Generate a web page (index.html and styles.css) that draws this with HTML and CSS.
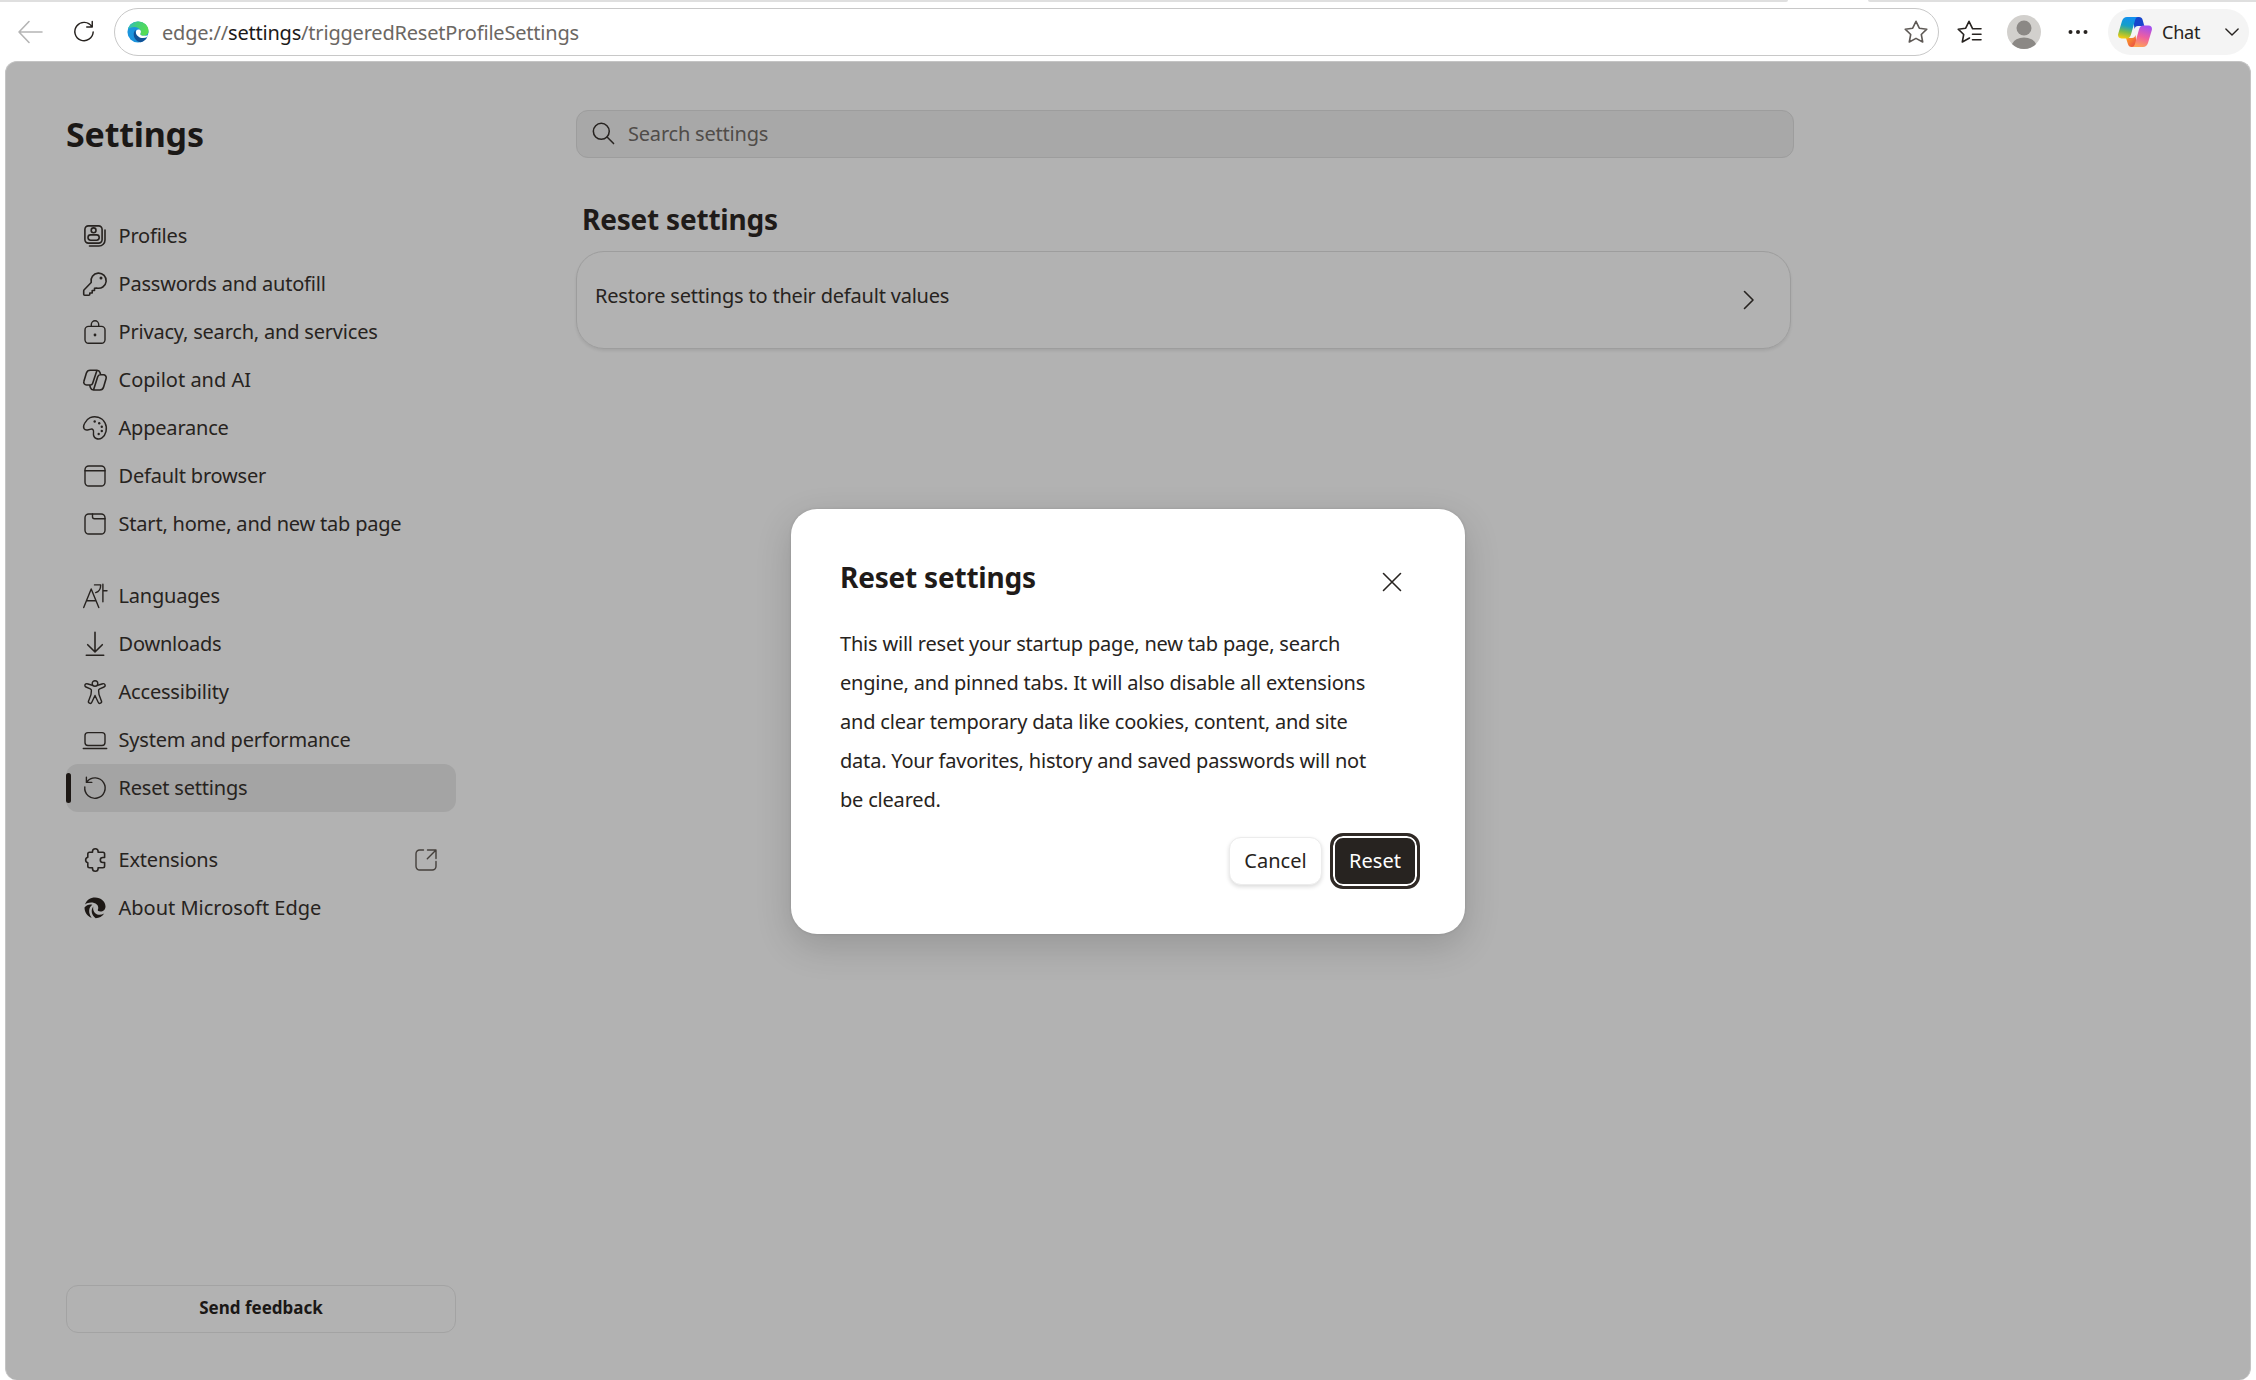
FILE: index.html
```html
<!DOCTYPE html>
<html lang="en">
<head>
    <meta charset="UTF-8">
    <meta name="viewport" content="width=device-width, initial-scale=1.0">
    <title>Settings</title>
    <link rel="stylesheet" href="styles.css">
</head>
<body>
    <div class="tabstrip"><i></i><i></i></div>
    <header class="toolbar">
        <svg class="icon back" viewBox="0 0 24 24"><path d="M24 12H1M11 1.500 1 12l10 10.500"/></svg>
        <svg class="icon reload" viewBox="0 0 24 24"><path d="M20.500 6.200A10 10 0 1 0 22 12M21 .500v6h-6"/></svg>
        <div class="address">
            <svg class="edge-logo" viewBox="0 0 24 24">
                <defs>
                    <linearGradient id="edge-green" x1="0" y1="0" x2="1" y2=".4">
                        <stop offset="0" stop-color="#2fb7d8"/>
                        <stop offset=".45" stop-color="#42cf7c"/>
                        <stop offset="1" stop-color="#55dc55"/>
                    </linearGradient>
                </defs>
                <circle cx="12" cy="12" r="11.500" fill="#1b94dd"/>
                <path d="M1 9C2.500 3.500 7 .500 12 .500c7 0 11.500 5 11.500 10 0 3.500-2.500 5.500-5.500 5.500-2.500 0-4-1-3.500-2.200.500-1 1-1.800.500-3.300C14 8 11 6.500 8 6.500 5 6.500 2.500 7.500 1 9z" fill="url(#edge-green)"/>
                <path d="M9.500 9.500C7 11.500 6.500 16 9 19.500c2 2.700 4.500 3.800 7 3.500 2.500-1 5-3 6-5.500-3 1.500-7 1.800-9.500-.500-2.500-2.300-3.500-5-3-7.500z" fill="#115297"/>
                <path d="M14.500 13.800c.500-1 1-1.800.500-3.300-.800-1.500-3.500-2-4.800-.200-1.200 2-.200 5 2.300 6.700 2.500 2.300 6.500 2 9.500.500l1-2c-5 1.500-9 .500-8.500-1.700z" fill="#fff"/>
            </svg>
            <div class="url">edge://<b>settings</b>/triggeredResetProfileSettings</div>
            <svg class="icon star" viewBox="0 0 24 24"><path d="M12 1.300l3.300 6.900 7.500 1-5.500 5.300 1.400 7.500L12 18.400 5.300 22l1.400-7.500L1.200 9.200l7.500-1z"/></svg>
        </div>
        <svg class="icon favorites" viewBox="0 0 24 24"><path d="M12.500 18 5.300 22l1.400-7.500L1.200 9.200l7.500-1L12 1.300l3.300 6.900M15.500 8.800H24M15.500 14.300H24M15.500 19.800H24"/></svg>
        <svg class="avatar" viewBox="0 0 34 34">
            <circle cx="17" cy="17" r="17" fill="#d2d0cd"/>
            <circle cx="17" cy="13" r="7.500" fill="#8b8885"/>
            <path d="M5 29a12.500 9 0 0 1 24 0 17 17 0 0 1-24 0z" fill="#8b8885"/>
        </svg>
        <svg class="dots" viewBox="0 0 20 6"><circle cx="2.500" cy="3" r="2"/><circle cx="10" cy="3" r="2"/><circle cx="17.500" cy="3" r="2"/></svg>
        <div class="chat">
            <svg class="copilot-logo" viewBox="0 0 34 30">
                <defs>
                    <linearGradient id="cp-left" x1=".5" y1="0" x2=".3" y2="1">
                        <stop offset="0" stop-color="#1190f0"/>
                        <stop offset=".4" stop-color="#159fc8"/>
                        <stop offset=".7" stop-color="#7cbb4a"/>
                        <stop offset="1" stop-color="#f5cd10"/>
                    </linearGradient>
                    <linearGradient id="cp-right" x1=".6" y1="0" x2=".3" y2="1">
                        <stop offset="0" stop-color="#a44ff0"/>
                        <stop offset=".5" stop-color="#ee5fa0"/>
                        <stop offset="1" stop-color="#ffa552"/>
                    </linearGradient>
                    <linearGradient id="cp-bottom" x1="0" y1="0" x2="1" y2="1">
                        <stop offset="0" stop-color="#ffb020"/>
                        <stop offset="1" stop-color="#e8404a"/>
                    </linearGradient>
                </defs>
                <path d="M15 0h6c2 0 3 .800 3.600 2.800L26.300 9H20c-2 0-3 1-3.500 3z" fill="#1745cc"/>
                <path d="M19 30h-5.500c-2 0-3-1-3.600-3L8 21h6c2 0 3-1 3.500-3z" fill="url(#cp-bottom)"/>
                <path d="M9 0h11.500c-2 0-2.800 1.200-3.400 3L13 17.500C12.200 20 11 21.500 8.500 21.500H3.500C.500 21.500-.500 19 .300 16.500L4 4C5 1.200 6.500 0 9 0z" fill="url(#cp-left)"/>
                <path d="M25 30H13.500c2 0 2.800-1.200 3.400-3L21 12.500C21.800 10 23 8.500 25.500 8.500h5c3 0 4 2.500 3.200 5L30 26c-1 2.800-2.500 4-5 4z" fill="url(#cp-right)"/>
            </svg>
            <span>Chat</span>
            <svg class="icon chevron-down" viewBox="0 0 16 9"><path d="M1 1l7 7 7-7"/></svg>
        </div>
    </header>

    <div class="page">
        <aside class="sidebar">
            <h1>Settings</h1>
            <nav>
                <ul>
                    <li>
                        <svg class="icon" viewBox="0 0 24 24"><rect x="1.900" y="1.900" width="17.200" height="17.200" rx="3.500"/><circle cx="10.600" cy="6.300" r="2.400"/><rect x="5" y="10.900" width="11.200" height="5.300" rx="2.600"/><path d="M22 6v10a6 6 0 0 1-6 6H6.500"/></svg>
                        <span>Profiles</span>
                    </li>
                    <li>
                        <svg class="icon" viewBox="0 0 24 24"><path d="M8.200 10.500A7.600 7.600 0 1 1 13.500 16l-2 .200V18.500H9.200V21H6.800v1.300a1 1 0 0 1-1 1H1.700a1 1 0 0 1-1-1v-3.500c0-.500.200-.800.500-1.100z"/><circle class="fill" cx="18" cy="6" r="1.500"/></svg>
                        <span>Passwords and autofill</span>
                    </li>
                    <li>
                        <svg class="icon thin" viewBox="0 0 24 24"><rect x="2" y="6.400" width="20" height="16.800" rx="3.500"/><path d="M8.300 6.400V4.500a3.700 3.700 0 0 1 7.400 0v1.900"/><circle class="fill" cx="12" cy="15" r="1.400"/></svg>
                        <span>Privacy, search, and services</span>
                    </li>
                    <li>
                        <svg class="icon" viewBox="0 0 24 24"><path d="M7.200 2.200H14L9.700 15.200a2.500 2.500 0 0 1-2.400 1.800H3.600A2.800 2.800 0 0 1 .900 13.300L3.400 5a4 4 0 0 1 3.800-2.800zM14 2.200a3.300 3.300 0 0 1 3 2.300l.600 2.300M16.800 22H10.500l4.200-13.200a2.800 2.800 0 0 1 2.700-2h3a2.800 2.800 0 0 1 2.700 3.700L20.600 19a4 4 0 0 1-3.800 3zM10.500 22a3.300 3.300 0 0 1-3-2.300L6.600 17"/></svg>
                        <span class="loose">Copilot and AI</span>
                    </li>
                    <li>
                        <svg class="icon thin" viewBox="0 0 24 24"><path d="M1.500 7.500C4 2 9.500-.300 15 1.200c6.500 2 9.500 8.300 8 14.300-1.500 6-6 8.800-9.800 7-2.500-1.200-3-3.600-2.700-6 .300-2.300-.500-3.700-2.500-3.400l-3.500.900C1.500 14.500-.800 12 1.500 7.500z"/><g class="fill"><circle cx="11.700" cy="5.500" r="1.200"/><circle cx="16.200" cy="7.200" r="1.200"/><circle cx="18.800" cy="10.800" r="1.200"/><circle cx="18.800" cy="15" r="1.200"/><circle cx="15.700" cy="18" r="1.200"/></g></svg>
                        <span>Appearance</span>
                    </li>
                    <li>
                        <svg class="icon thin" viewBox="0 0 24 24"><rect x="2" y="2" width="20" height="20" rx="3.800"/><path d="M2 6.700h20"/></svg>
                        <span>Default browser</span>
                    </li>
                    <li>
                        <svg class="icon thin" viewBox="0 0 24 24"><rect x="2" y="2" width="20" height="20" rx="3.800"/><path d="M9.500 2v2.700a2 2 0 0 0 2 2H22"/></svg>
                        <span>Start, home, and new tab page</span>
                    </li>
                </ul>
                <ul>
                    <li>
                        <svg class="icon thin" viewBox="0 0 24 24"><path d="M.700 23.500 8.200 5l7.600 18.500M3.400 16.800H13M11.500.900h6.200c0 4-1.500 6.600-5 7.700M19.900.300v17.400M19.900 6.700H24"/></svg>
                        <span>Languages</span>
                    </li>
                    <li>
                        <svg class="icon" viewBox="0 0 24 24"><path d="M12 .300v19.500M4.700 12.700 12 20l7.300-7.300M3.300 23.300h17.400"/></svg>
                        <span>Downloads</span>
                    </li>
                    <li>
                        <svg class="icon thin" viewBox="0 0 24 24"><circle cx="12" cy="3.500" r="2.800"/><path d="M9.300 5.200 4.200 3.800a1.700 1.700 0 0 0-1.200 3.200l4.300 1.800c.800.400 1.200 1 1.100 1.900L8 14.500l-2.400 6.400a1.700 1.700 0 0 0 3.200 1.400L12 15.500l3.200 6.800a1.700 1.700 0 0 0 3.200-1.400L16 14.500l-.400-3.800c-.100-.900.300-1.500 1.100-1.900L21 7a1.700 1.700 0 0 0-1.200-3.200l-5.100 1.400"/></svg>
                        <span>Accessibility</span>
                    </li>
                    <li>
                        <svg class="icon thin" viewBox="0 0 24 24"><rect x="2" y="4.600" width="20" height="12.900" rx="3"/><path d="M.300 20.500h23.400"/></svg>
                        <span>System and performance</span>
                    </li>
                    <li class="active">
                        <svg class="icon thin" viewBox="0 0 24 24"><path d="M1.800 11A10.200 10.200 0 1 0 4 5.700M3.400 1.200v5.200h5.400"/></svg>
                        <span>Reset settings</span>
                    </li>
                </ul>
                <ul>
                    <li>
                        <svg class="icon" viewBox="0 0 24 24"><path d="M6.500 4.300h3v-.800a2.800 2.800 0 0 1 5.600 0v.800h4.800a1.700 1.700 0 0 1 1.700 1.700v3.500h-1.800a2.500 2.500 0 0 0 0 5h1.800v3.600a1.700 1.700 0 0 1-1.700 1.700h-4.800v.700a2.800 2.800 0 0 1-5.600 0v-.700h-3a1.700 1.700 0 0 1-1.700-1.700v-3.300a2.900 2.900 0 0 1 0-5.600V6a1.700 1.700 0 0 1 1.700-1.700z"/></svg>
                        <span>Extensions</span>
                        <svg class="icon thin external" viewBox="0 0 24 24"><path d="M9.500 2H5.700A3.700 3.700 0 0 0 2 5.700v12.600A3.700 3.700 0 0 0 5.700 22h12.600a3.700 3.700 0 0 0 3.700-3.700v-4.800M13.500 2H22v8.500M22 2l-8.700 8.700"/></svg>
                    </li>
                    <li>
                        <svg class="icon swirl" viewBox="0 0 24 24"><path d="M2 8.500C3.500 4 7.500 1.500 12 1.500c6 0 10.500 4.200 10.500 9 0 3-2.300 5-5 5-1.800 0-3-.700-2.700-1.700.900-1.800.500-4-1-5.300C10.500 5.800 5.500 6 2 8.500z"/><path d="M1.500 11.500C3.500 9 6.500 8 9.300 8.800 5.500 11.500 5 17 8.700 21.800 4.500 20.500 1.500 16.500 1.500 11.500z"/><path d="M10.300 10.500c-.800 4 1.500 7.800 5.200 8.200 2 .200 3.800-.200 5.700-1.200-2 3-5 4.500-8.500 4.700C8.800 19.500 7.300 14 10.300 10.500z"/></svg>
                        <span class="loose">About Microsoft Edge</span>
                    </li>
                </ul>
            </nav>
            <button class="feedback">Send feedback</button>
        </aside>

        <main class="content">
            <div class="search">
                <svg class="icon" viewBox="0 0 24 24"><circle cx="9.700" cy="9.700" r="8.300"/><path d="M15.700 15.700 22.500 22.500"/></svg>
                <span>Search settings</span>
            </div>
            <h2>Reset settings</h2>
            <div class="card">
                <span>Restore settings to their default values</span>
                <svg class="icon chevron" viewBox="0 0 12 20"><path d="M1.500 1.500 10 10l-8.500 8.500"/></svg>
            </div>
        </main>
    </div>

    <div class="dialog" role="dialog">
        <div class="dialog-header">
            <h2>Reset settings</h2>
            <svg class="icon close" viewBox="0 0 20 20"><path d="M1.500 1.500l17 17M18.500 1.500l-17 17"/></svg>
        </div>
        <p>This will reset your startup page, new tab page, search<br>engine, and pinned tabs. It will also disable all extensions<br>and clear temporary data like cookies, content, and site<br>data. Your favorites, history and saved passwords will not<br>be cleared.</p>
        <div class="actions">
            <button class="cancel">Cancel</button>
            <button class="reset">Reset</button>
        </div>
    </div>
</body>
</html>
```
FILE: styles.css
```css
* {
    box-sizing: border-box;
}
body {
    margin: 0;
    height: 1380px;
    overflow: hidden;
    display: flex;
    flex-direction: column;
    background: #fff;
    color: #272320;
    font-family: "Segoe UI", "Noto Sans", "Open Sans", sans-serif;
    font-size: 20px;
    line-height: 28px;
    letter-spacing: -0.2px;
}
h1, h2, p, ul {
    margin: 0;
    padding: 0;
}
button {
    font: inherit;
    color: inherit;
    padding: 0;
}
.icon {
    width: 24px;
    height: 24px;
    flex: none;
    fill: none;
    stroke: #272320;
    stroke-width: 1.6;
    stroke-linecap: round;
    stroke-linejoin: round;
    overflow: visible;
}
.icon.thin {
    stroke-width: 1.4;
}
.icon .fill {
    fill: #272320;
    stroke: none;
}
.loose {
    letter-spacing: 0;
}

/* bottom edge of the tab strip, open under the current tab */
.tabstrip {
    display: flex;
    gap: 80px;
    height: 2px;
    flex: none;
}
.tabstrip i {
    width: 1788px;
    background: #dfdfdf;
    border-radius: 0 0 2px 0;
}
.tabstrip i + i {
    width: auto;
    flex: 1;
    border-radius: 0 0 0 2px;
}

/* browser toolbar */
.toolbar {
    display: flex;
    align-items: center;
    height: 59px;
    padding: 1px 7px 0 18px;
    flex: none;
}
.toolbar .back {
    stroke: #b5b5b5;
}
.toolbar .reload {
    width: 22px;
    height: 22px;
    margin-left: 31px;
}
.address {
    display: flex;
    align-items: center;
    width: 1825px;
    height: 48px;
    margin-left: 19px;
    padding: 0 10px 0 12px;
    border: 1px solid #c8c8c8;
    border-radius: 24px;
}
.edge-logo {
    width: 22px;
    height: 22px;
}
.url {
    flex: 1;
    margin-left: 13px;
    padding-top: 1px;
    color: #6b6763;
}
.url b {
    font-weight: normal;
    color: #1b1a19;
}
.star {
    stroke: #5f5a56;
}
.favorites {
    margin-left: 18px;
}
.avatar {
    width: 34px;
    height: 34px;
    margin-left: 26px;
}
.dots {
    width: 20px;
    height: 6px;
    margin-left: 27px;
    fill: #272320;
}
.chat {
    display: flex;
    align-items: center;
    width: 141px;
    height: 46px;
    margin-left: auto;
    padding: 0 10px 0 10px;
    border-radius: 23px;
    background: #f4f4f4;
    font-size: 18px;
}
.copilot-logo {
    width: 34px;
    height: 30px;
    margin-right: 10px;
}
.chevron-down {
    width: 14px;
    height: 8px;
    margin-left: auto;
}

/* settings page */
.page {
    display: flex;
    flex: 1;
    margin: 0 5px 0 5px;
    padding: 48px 60px 47px;
    border: 1px solid #c4c4c4;
    border-bottom: 0;
    border-radius: 12px;
    background: #b2b2b2;
}
.sidebar {
    display: flex;
    flex-direction: column;
    width: 390px;
}
.sidebar h1 {
    height: 102px;
    padding-top: 2px;
    font-size: 34px;
    line-height: 44px;
    color: #1b1816;
}
.sidebar ul {
    list-style: none;
    margin-bottom: 24px;
}
.sidebar li {
    display: flex;
    align-items: center;
    height: 48px;
    padding: 0 18px 0 17px;
    border-radius: 12px;
}
.sidebar li span {
    margin-left: 11.500px;
}
.sidebar .active {
    position: relative;
    background: #a4a4a4;
}
.active::before {
    content: "";
    position: absolute;
    left: 0;
    top: 9px;
    width: 5px;
    height: 30px;
    border-radius: 3px;
    background: #1d1815;
}
.external {
    margin-left: auto;
    stroke: #45403c;
}
.swirl {
    fill: #1d1815;
    stroke: none;
}
.feedback {
    height: 48px;
    margin-top: auto;
    padding-bottom: 2px;
    border: 1px solid #a3a3a3;
    border-radius: 12px;
    background: none;
    font-size: 17px;
    font-weight: bold;
    color: #1b1816;
}
.content {
    width: 1218px;
    margin-left: 120px;
}
.search {
    display: flex;
    align-items: center;
    height: 48px;
    padding: 0 15px 1px;
    border: 1px solid #9d9d9d;
    border-radius: 12px;
    background: #a8a8a8;
    color: #504c49;
}
.search .icon {
    width: 23px;
    height: 23px;
}
.search span {
    margin-left: 13px;
}
h2 {
    font-size: 28px;
    line-height: 40px;
    color: #1f1b19;
}
.content h2 {
    margin: 41px 0 12px 6px;
}
.card {
    display: flex;
    align-items: center;
    justify-content: space-between;
    width: 1215px;
    height: 98px;
    padding: 0 35px 0 18px;
    border: 1px solid #9d9d9d;
    border-radius: 28px;
    box-shadow: 0 2px 3px rgba(0, 0, 0, 0.08);
}
.card span {
    margin-bottom: 9px;
}
.chevron {
    width: 12px;
    height: 20px;
}

/* dialog sits above the page */
.dialog {
    position: absolute;
    left: 791px;
    top: 509px;
    width: 674px;
    height: 425px;
    padding: 48px 45px 46px 49px;
    border-radius: 26px;
    background: #fff;
    box-shadow: 0 12px 36px rgba(0, 0, 0, 0.16), 0 0 3px rgba(0, 0, 0, 0.12);
}
.dialog-header {
    display: flex;
    justify-content: space-between;
    align-items: center;
    padding-right: 18px;
}
.close {
    width: 20px;
    height: 20px;
    margin-top: 9px;
}
.dialog p {
    margin-top: 27px;
    line-height: 39px;
}
.actions {
    display: flex;
    justify-content: flex-end;
    align-items: center;
    gap: 8px;
    margin-top: 14px;
}
.cancel {
    width: 93px;
    height: 48px;
    border: 1px solid #ececec;
    border-radius: 12px;
    background: #fff;
    box-shadow: 0 2px 4px rgba(0, 0, 0, 0.14);
}
.reset {
    width: 90px;
    height: 56px;
    border: 3px solid #302a26;
    border-radius: 13px;
    background: #272320;
    box-shadow: inset 0 0 0 2px #fff;
    color: #fff;
}
```
